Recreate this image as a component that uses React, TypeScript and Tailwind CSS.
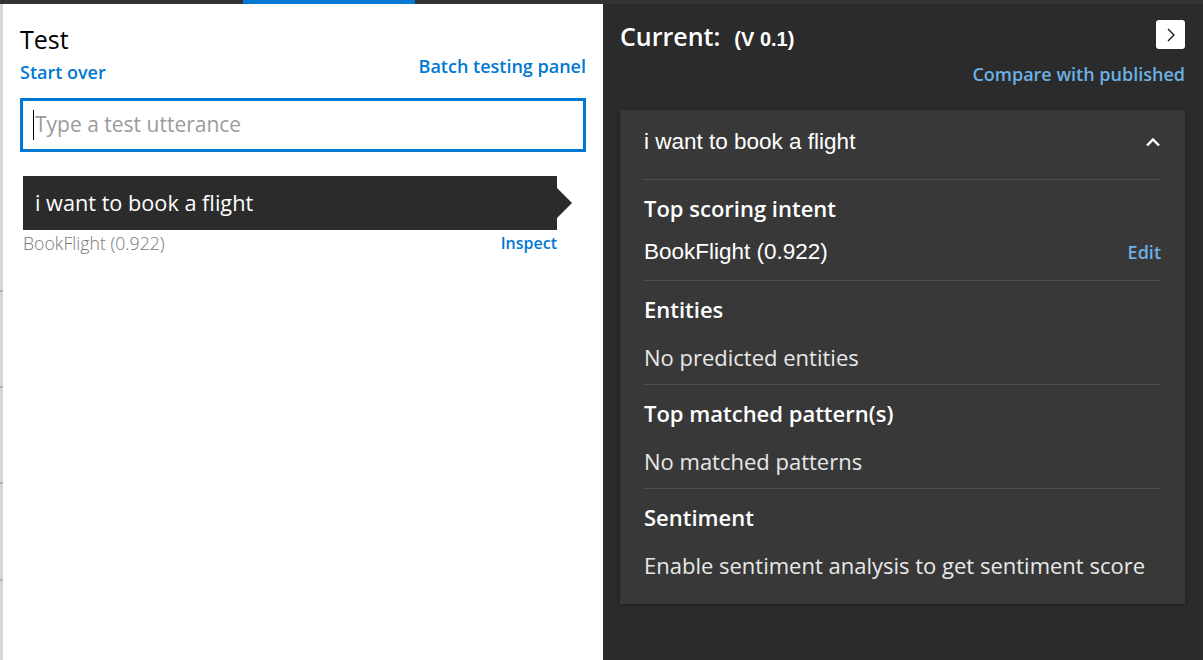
import React from 'react';

const sans = "font-['Segoe_UI','Open_Sans',sans-serif]";
const arial = "font-['Liberation_Sans',Arial,sans-serif]";

const sections = [
  { title: 'Top scoring intent', value: 'BookFlight (0.922)', edit: true },
  { title: 'Entities', value: 'No predicted entities' },
  { title: 'Top matched pattern(s)', value: 'No matched patterns' },
  { title: 'Sentiment', value: 'Enable sentiment analysis to get sentiment score' },
];

function LeftEdge() {
  // strip of the page behind the panel, with row ticks
  return (
    <div className="w-[3px] flex flex-col bg-[#d6d6d6]">
      <div className="h-[286px]" />
      <div className="h-[2px] bg-[#b4b4b4]" />
      <div className="h-[94px]" />
      <div className="h-[2px] bg-[#b4b4b4]" />
      <div className="h-[94px]" />
      <div className="h-[2px] bg-[#b4b4b4]" />
      <div className="h-[95px]" />
      <div className="h-[2px] bg-[#b4b4b4]" />
    </div>
  );
}

function TestPanel() {
  return (
    <div className="w-[603px] flex flex-col bg-white">
      <div className="h-1 flex bg-[#333333]">
        <div className="w-[243px]" />
        <div className="w-[172px] bg-[#0078d4]" />
      </div>
      <div className="flex flex-1">
        <LeftEdge />
        <div className={`flex-1 pl-[17px] pr-[17px] ${sans}`}>
          <div className="flex justify-between items-start mt-5">
            <div>
              <h2 className="text-[25px] leading-[30px] text-black">Test</h2>
              <button className="mt-[6px] text-[18px] leading-6 font-semibold text-[#0078d4]">Start over</button>
            </div>
            <button className="mt-[30px] text-[18px] leading-6 font-semibold text-[#0078d4]">Batch testing panel</button>
          </div>
          <div className="mt-[13px] h-[54px] border-[3px] border-[#0078d4] flex items-center pl-[10px]">
            <div className="w-px h-[30px] bg-black" />
            <input
              className="flex-1 ml-px text-[21px] outline-none placeholder:text-[#9b9b9b] bg-transparent"
              placeholder="Type a test utterance"
            />
          </div>
          <div className="mt-[24px] ml-[3px] w-[549px] flex items-center">
            <div className="w-[534px] h-[54px] bg-[#2b2b2b] flex items-center pl-3">
              <span className="text-[21.7px] text-white">i want to book a flight</span>
            </div>
            <div className="w-0 h-0 border-y-[15px] border-y-transparent border-l-[15px] border-l-[#2b2b2b]" />
          </div>
          <div className="ml-[3px] w-[534px] flex justify-between items-center h-[26px]">
            <span className="text-[17.7px] font-light text-[#777777]">BookFlight (0.922)</span>
            <button className="text-[16px] font-semibold text-[#0078d4]">Inspect</button>
          </div>
        </div>
      </div>
    </div>
  );
}

function ResultPanel() {
  return (
    <div className={`flex-1 flex flex-col bg-[#2b2b2b] ${sans}`}>
      <div className="h-1 bg-[#333333]" />
      <div className="pl-[17px] pr-[18px]">
        <div className="flex justify-between items-start mt-4">
          <div className="flex items-baseline">
            <span className="text-[25px] leading-[32px] font-semibold text-white">Current:</span>
            <span className={`ml-[14px] text-[20px] font-bold text-white ${arial}`}>(V 0.1)</span>
          </div>
          <button className="w-[29px] h-[29px] bg-white rounded-[3px] flex items-center justify-center">
            <svg width="10" height="14" viewBox="0 0 10 14" fill="none">
              <path d="M2 1l6 6-6 6" stroke="#111" strokeWidth="1.3" />
            </svg>
          </button>
        </div>
        <div className="flex justify-end mt-[8px]">
          <button className="text-[18px] leading-6 font-semibold text-[#6cb0e4]">Compare with published</button>
        </div>
        <div className="mt-[24px] bg-[#383838] px-6 h-[494px] shadow-[0_1px_3px_rgba(0,0,0,0.4)]">
          <div className="flex items-center justify-between h-[60px] pt-[3px] mb-[9px]">
            <span className={`text-[22.5px] text-white ${arial}`}>i want to book a flight</span>
            <svg width="16" height="10" viewBox="0 0 16 10" fill="none">
              <path d="M2 8.5l6-6 6 6" stroke="#fff" strokeWidth="2.4" />
            </svg>
          </div>
          {sections.map((s, i) => (
            <div key={s.title} className={`border-t border-[#505050] pt-[10px] ${i === 0 ? 'pb-[10px]' : 'pb-[9px]'}`}>
              <div className="h-9 flex items-center text-[22px] font-semibold text-white">{s.title}</div>
              <div className={`h-9 flex items-center justify-between ${i === 0 ? 'mt-[8px]' : 'mt-3'}`}>
                {s.edit ? (
                  <>
                    <span className={`text-[22.5px] text-white ${arial}`}>{s.value}</span>
                    <button className="text-[18px] font-semibold text-[#6cb0e4]">Edit</button>
                  </>
                ) : (
                  <span className="text-[22px] text-[#e8e8e8]">{s.value}</span>
                )}
              </div>
            </div>
          ))}
        </div>
      </div>
    </div>
  );
}

export default function App() {
  return (
    <div className="flex w-[1203px] h-[660px] overflow-hidden">
      <TestPanel />
      <ResultPanel />
    </div>
  );
}
